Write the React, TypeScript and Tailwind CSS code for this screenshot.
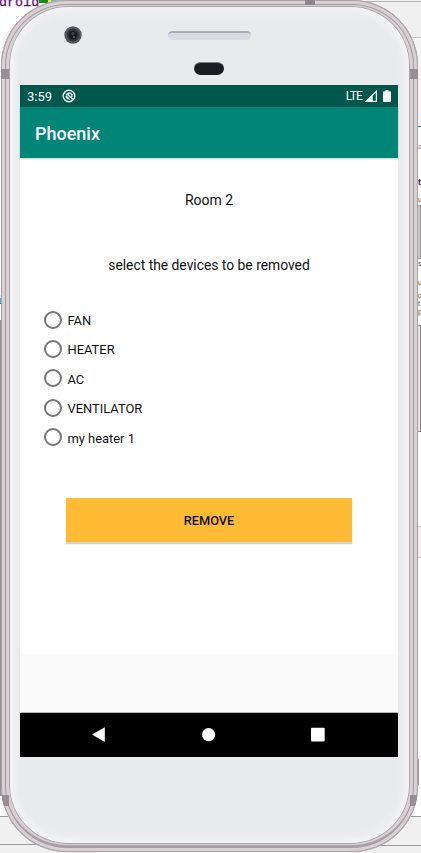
import React from "react";

const devices = ["FAN", "HEATER", "AC", "VENTILATOR", "my heater 1"];

function Backdrop() {
  return (
    <div className="col-start-1 row-start-1 flex justify-between bg-white font-['Liberation_Sans',sans-serif] text-[#444]">
      <div className="flex w-[100px] flex-col">
        <div className="flex h-[295px] items-start">
          <span className="-mt-[5px] -ml-px font-['Liberation_Mono',monospace] text-[13.4px] leading-[15px] text-[#660e7a] [-webkit-text-stroke:0.3px_#660e7a]">
            droid
          </span>
          <span className="h-[3px] w-[9px] bg-[#159015]" />
          <span className="h-[2px] w-[3px] bg-[#f2e64c]" />
          <span className="h-[2px] w-[10px] bg-[#62b8bd]" />
        </div>
        <div className="h-[3px] w-[3px] bg-[#c7efff]" />
        <div className="h-[5px] w-[3px] bg-[#3cb9ee]" />
        <div className="h-px w-[3px] bg-[#397d30]" />
        <div className="mt-[16px] h-[476px] w-[3px] bg-[#929292]" />
        <div className="mt-[20px] h-[29px] border-y border-[#999] bg-[#f0f0f0]" />
        <div className="grow bg-[#f0f0f0]" />
      </div>
      <div className="flex w-[70px] flex-col">
        <div className="h-[38px] border-b border-[#c3c3c3] bg-[#f0f0f0] pt-px">
          <div className="h-px bg-[#b5b5b5]" />
        </div>
        <div className="h-[88px] bg-[#f4f4f4]" />
        <div className="h-px bg-[#2675e8]" />
        <div className="ml-[67px] mt-[15px] h-[10px] text-[8px] leading-[10px] text-[#888]">a</div>
        <div className="ml-[67px] mt-[25px] h-[10px] text-[9px] font-bold leading-[10px] text-[#222]">t</div>
        <div className="ml-[67px] mt-[8px] h-[10px] text-[7px] leading-[10px]">u</div>
        <div className="h-[54px] border border-[#999] bg-[#c5c7c6]" />
        <div className="ml-[67px] h-[10px] text-[7px] leading-[10px]">s</div>
        <div className="ml-[67px] mt-[9px] h-[10px] text-[7px] leading-[10px]">u</div>
        <div className="ml-[67px] mt-[4px] h-[24px] text-[7px] leading-[8px]">
          <div>o</div>
          <div>t</div>
          <div>p</div>
        </div>
        <div className="mt-[9px] h-[107px] border border-[#888] bg-[#e3e4e0]" />
        <div className="mt-[94px] h-[32px] border-y border-[#c4c4c4] bg-[#f0f0f0]" />
        <div className="mt-[201px] h-[26px] w-[68px] bg-[#999]" />
        <div className="mt-[31px] h-[30px] border-y border-[#999] bg-[#f0f0f0]" />
        <div className="grow bg-[#f0f0f0]" />
      </div>
    </div>
  );
}

function Camera() {
  return (
    <svg className="size-[18px] shrink-0" viewBox="0 0 18 18">
      <circle cx="9" cy="9" r="8.7" fill="#55585d" />
      <circle cx="9" cy="9" r="6.5" fill="#34363b" />
      <circle cx="9" cy="9" r="4.2" fill="#17191d" />
      <circle cx="9" cy="7.5" r="1.7" fill="#34434e" />
      <circle cx="10" cy="11" r="1.1" fill="#65602f" />
    </svg>
  );
}

function StatusBar() {
  return (
    <div className="flex h-[22px] items-center bg-[#00574b] px-[7px] text-white">
      <span className="w-[35px] pt-px text-[13px] leading-[21px]">3:59</span>
      <svg className="size-[14px]" viewBox="0 0 14 14" fill="none" stroke="white">
        <circle cx="7" cy="7" r="5.8" strokeWidth="1.4" />
        <path d="M4.2 6.2A3.2 3.2 0 0 1 9.7 5.3Q10.6 7.2 9.5 8.5" strokeWidth="1.2" />
        <path d="M5.5 5.2 11 10.6" strokeWidth="1.4" />
        <path d="M3.7 7.2Q4 10.4 7.8 10.2L4.4 6.8Z" fill="white" strokeWidth=".5" />
      </svg>
      <span className="ml-auto text-[12px] leading-[22px] tracking-[-0.9px]">LTE</span>
      <svg className="ml-[3px] h-[12px] w-[12px]" viewBox="0 0 12 12">
        <path d="M11.4 1.3V11.4H1.3Z" fill="none" stroke="white" strokeWidth="1.2" />
        <path d="M0 12 7.6 4.4V12Z" fill="white" />
      </svg>
      <svg className="ml-[6px] h-[12px] w-[8px]" viewBox="0 0 8 12">
        <path d="M2.5 0h3v1.2H7a1 1 0 0 1 1 1V11a1 1 0 0 1-1 1H1a1 1 0 0 1-1-1V2.2a1 1 0 0 1 1-1h1.5Z" fill="white" />
      </svg>
    </div>
  );
}

function Screen() {
  return (
    <div className="ml-[11px] flex h-[672px] w-[378px] shrink-0 flex-col bg-[#fafafa]">
      <StatusBar />
      <header className="z-10 h-[51px] bg-[#008577] pl-[15px] text-[18px] font-medium leading-[53px] text-white shadow-[0_1px_2px_rgba(0,0,0,0.2)]">
        Phoenix
      </header>
      <main className="flex h-[496px] flex-col items-center bg-white text-[#111]">
        <h1 className="mt-[32px] text-[14px] leading-[20px]">Room 2</h1>
        <p className="mt-[45px] text-[13.85px] leading-[20px]">select the devices to be removed</p>
        <div className="flex flex-col self-stretch pl-[24px] pt-[30px]">
          {devices.map((device) => (
            <label key={device} className="flex h-[29.4px] items-center">
              <input
                type="radio"
                name="device"
                className="size-[18px] appearance-none rounded-full border-2 border-[#757575] bg-white"
              />
              <span className="ml-[5.5px] pt-[2.6px] text-[12.9px] leading-[20px]">{device}</span>
            </label>
          ))}
        </div>
        <button className="mt-[46px] h-[44px] w-[286px] bg-[#ffbb33] pt-px text-[12.8px] font-medium leading-[43px] shadow-[0_2px_1px_rgba(0,0,0,0.18)]">
          REMOVE
        </button>
      </main>
      <div className="h-[59px] border-b border-[#b5b5b5] bg-[#fafafa]" />
      <nav className="h-[44px] bg-black">
        <svg className="size-full" viewBox="0 0 378 44" fill="white">
          <path d="M72 21.6 84.8 14.2V29Z" />
          <circle cx="188.6" cy="21.7" r="6.6" />
          <rect x="291" y="14.7" width="13.7" height="13.7" rx=".8" />
        </svg>
      </nav>
    </div>
  );
}

function RimSide() {
  return (
    <div className="flex w-[8px] shrink-0 flex-col justify-between pb-[38px] pt-[63px]">
      <div className="h-[10px] bg-[#8e868a]/85" />
      <div className="h-[11px] bg-[#8e868a]/85" />
    </div>
  );
}

export default function App() {
  return (
    <div className="grid h-[853px] w-[421px] grid-cols-[421px] grid-rows-[853px] overflow-hidden font-[Roboto,sans-serif]">
      <Backdrop />
      <div className="z-10 col-start-1 row-start-1 ml-px flex h-[852px] w-[417px] flex-col overflow-hidden rounded-[66px] bg-[#d8d0d3] shadow-[inset_0_0_0_1px_#aaa4a7,inset_0_0_0_4px_#d8d0d3,inset_0_0_0_5px_#a39b9f,inset_0_-4px_0_3px_#aaa2a6]">
        <div className="flex h-[6px] shrink-0 pl-[304px]">
          <div className="h-[5px] w-[10px] bg-[#8e868a]" />
        </div>
        <div className="flex h-[838px] shrink-0">
          <RimSide />
          <div className="flex grow flex-col overflow-hidden rounded-[59px] bg-[#e9eaec] shadow-[inset_0_0_0_1px_#aaa5a8,inset_0_0_9px_5px_#f6f6f8]">
            <div className="flex h-[79px] shrink-0 items-start gap-[86px] pl-[55px] pt-[20px]">
              <Camera />
              <div className="flex w-[83px] flex-col items-start gap-[22px] pt-[5px]">
                <div className="h-[9px] w-full rounded-full border-t-2 border-[#a8adb6] bg-[#d9dbe0]" />
                <div className="ml-[26px] h-[13px] w-[30px] rounded-full border-t border-[#777b7b] bg-[#1b1d20]" />
              </div>
            </div>
            <Screen />
          </div>
          <RimSide />
        </div>
      </div>
    </div>
  );
}
